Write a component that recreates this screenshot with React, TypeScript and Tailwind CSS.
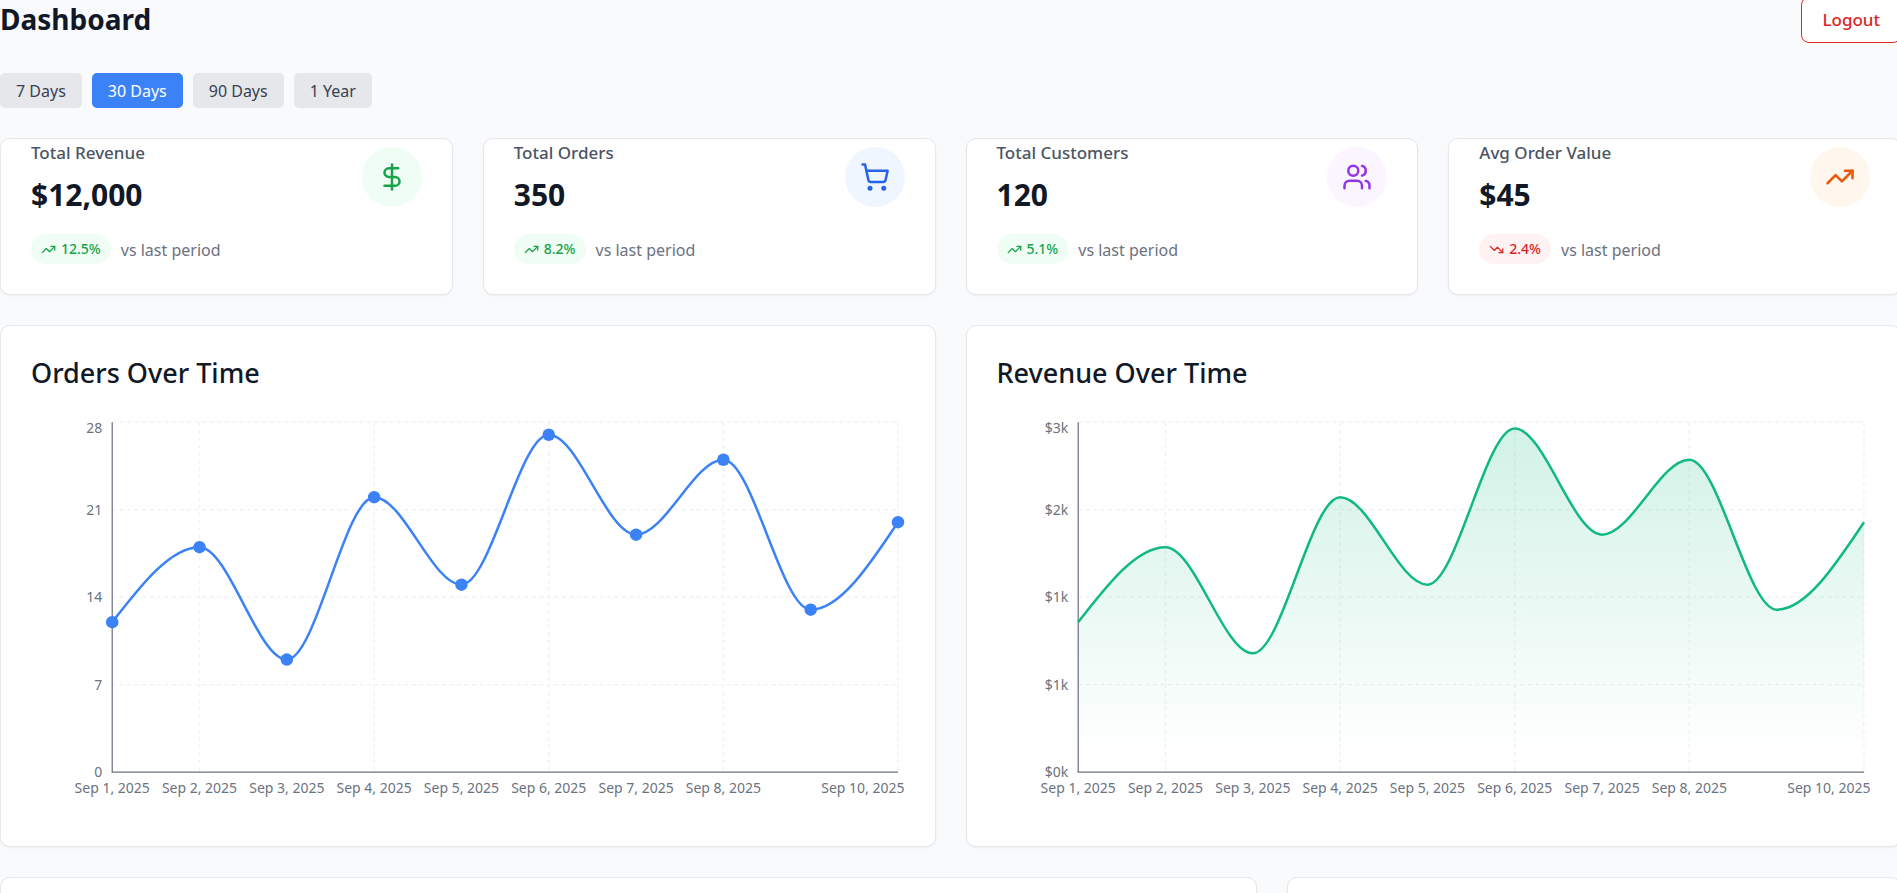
import { useId, useState } from "react";
import { DollarSign, ShoppingCart, TrendingDown, TrendingUp, Users, type LucideIcon } from "lucide-react";

type Point = { x: number; y: number };

const RANGES = ["7 Days", "30 Days", "90 Days", "1 Year"];

const STATS: { label: string; value: string; change: number; icon: LucideIcon; tone: string }[] = [
  { label: "Total Revenue", value: "$12,000", change: 12.5, icon: DollarSign, tone: "bg-[#f0fdf4] text-[#16a34a]" },
  { label: "Total Orders", value: "350", change: 8.2, icon: ShoppingCart, tone: "bg-[#eff6ff] text-[#2563eb]" },
  { label: "Total Customers", value: "120", change: 5.1, icon: Users, tone: "bg-[#faf5ff] text-[#9333ea]" },
  { label: "Avg Order Value", value: "$45", change: -2.4, icon: TrendingUp, tone: "bg-[#fff7ed] text-[#ea580c]" },
];

const ORDERS = [12, 18, 9, 22, 15, 27, 19, 25, 13, 20];
const REVENUE = [1200, 1800, 950, 2200, 1500, 2750, 1900, 2500, 1300, 2000];

const CARD = "rounded-[10px] border border-[#e5e7eb] bg-white shadow-[0_1px_2px_rgba(0,0,0,0.06)]";

const WIDTH = 874;
const HEIGHT = 400;
const LEFT = 81.25;
const RIGHT = 867.5;
const TOP = 6.25;
const BOTTOM = 356.25;
const STEP = (RIGHT - LEFT) / 9;

function toPoints(values: number[], max: number): Point[] {
  return values.map((v, i) => ({ x: LEFT + i * STEP, y: BOTTOM - (v / max) * (BOTTOM - TOP) }));
}

/** Monotone cubic interpolation, so that the curve never overshoots its data. */
function monotonePath(p: Point[]): string {
  const n = p.length;
  const slope = p.slice(1).map((q, i) => (q.y - p[i].y) / (q.x - p[i].x));
  const t: number[] = new Array(n).fill(0);
  for (let i = 1; i < n - 1; i++) {
    const a = slope[i - 1];
    const b = slope[i];
    t[i] = (Math.sign(a) + Math.sign(b)) * Math.min(Math.abs(a), Math.abs(b), Math.abs(a + b) / 4) || 0;
  }
  t[0] = (3 * slope[0] - t[1]) / 2;
  t[n - 1] = (3 * slope[n - 2] - t[n - 2]) / 2;
  let d = `M${p[0].x},${p[0].y}`;
  for (let i = 1; i < n; i++) {
    const h = (p[i].x - p[i - 1].x) / 3;
    d += `C${p[i - 1].x + h},${p[i - 1].y + h * t[i - 1]},${p[i].x - h},${p[i].y - h * t[i]},${p[i].x},${p[i].y}`;
  }
  return d;
}

function TimeChart({ title, values, max, ticks, color, area }: {
  title: string;
  values: number[];
  max: number;
  ticks: string[];
  color: string;
  area?: boolean;
}) {
  const id = useId();
  const points = toPoints(values, max);
  const line = monotonePath(points);
  const rows = ticks.map((label, i) => ({ label, y: BOTTOM - (i * (BOTTOM - TOP)) / (ticks.length - 1) }));

  return (
    <section className={`p-[30px] ${CARD}`}>
      <h2 className="mb-[26px] text-[27px] leading-[34px] font-medium">{title}</h2>
      <svg viewBox={`0 0 ${WIDTH} ${HEIGHT}`} role="img" aria-label={title} className="block h-auto w-full text-sm">
        <defs>
          <linearGradient id={id} x1="0" y1="0" x2="0" y2="1">
            <stop offset="5%" stopColor={color} stopOpacity="0.3" />
            <stop offset="95%" stopColor={color} stopOpacity="0" />
          </linearGradient>
        </defs>
        <g stroke="#f0f0f0" strokeWidth="1.25" strokeDasharray="3.75 3.75">
          {rows.slice(1).map((r) => (
            <line key={r.y} x1={LEFT} x2={RIGHT} y1={r.y} y2={r.y} />
          ))}
          {[1, 3, 5, 7, 9].map((i) => (
            <line key={i} x1={points[i].x} x2={points[i].x} y1={TOP} y2={BOTTOM} />
          ))}
        </g>
        {area && <path d={`${line}V${BOTTOM}H${LEFT}Z`} fill={`url(#${id})`} fillOpacity="0.6" />}
        <path d={`M${LEFT},${TOP}V${BOTTOM}H${RIGHT}`} fill="none" stroke="#6b7280" strokeWidth="1.25" />
        <path d={line} fill="none" stroke={color} strokeWidth="2.5" />
        {!area && points.map((p) => <circle key={p.x} cx={p.x} cy={p.y} r="6.25" fill={color} />)}
        <g fill="#6b7280" textAnchor="end">
          {rows.map((r) => (
            <text key={r.y} x={LEFT - 10} y={Math.max(r.y + 5, 17)}>
              {r.label}
            </text>
          ))}
          <text x={WIDTH} y="377">Sep 10, 2025</text>
        </g>
        <g fill="#6b7280" textAnchor="middle">
          {points.slice(0, 8).map((p, i) => (
            <text key={p.x} x={p.x} y="377">{`Sep ${i + 1}, 2025`}</text>
          ))}
        </g>
      </svg>
    </section>
  );
}

function StatCard({ label, value, change, icon: Icon, tone }: (typeof STATS)[number]) {
  const up = change > 0;
  const Trend = up ? TrendingUp : TrendingDown;
  return (
    <section className={`px-[30px] pt-[2px] pb-[30px] ${CARD}`}>
      <div className="flex items-center justify-between">
        <div>
          <h2 className="mb-3 text-[17px] leading-6 font-medium text-[#4b5563]">{label}</h2>
          <p className="text-[30px] leading-9 font-bold">{value}</p>
        </div>
        <span className={`flex size-[60px] items-center justify-center rounded-full ${tone}`}>
          <Icon size={30} />
        </span>
      </div>
      <div className="mt-[21px] flex items-center gap-[10px]">
        <span
          className={`flex h-[30px] items-center gap-[5px] rounded-full px-[10px] text-sm font-medium ${
            up ? "bg-[#f0fdf4] text-[#16a34a]" : "bg-[#fef2f2] text-[#dc2626]"
          }`}
        >
          <Trend size={15} />
          {Math.abs(change)}%
        </span>
        <span className="pt-[2px] text-base text-[#6b7280]">vs last period</span>
      </div>
    </section>
  );
}

export default function App() {
  const [range, setRange] = useState("30 Days");
  return (
    <div className="h-screen overflow-hidden bg-[#f9fafc] font-['Noto_Sans','Open_Sans',sans-serif] text-[#111827]">
      <main className="-mt-[3px] -mr-1 flex flex-col gap-[30px]">
        <header className="flex h-[46px] items-center justify-between">
          <h1 className="pb-[2px] text-[28px] leading-9 font-bold">Dashboard</h1>
          <button
            type="button"
            className="h-full rounded-lg border border-[#dc2626] bg-white px-5 text-[17px] font-medium text-[#dc2626]"
          >
            Logout
          </button>
        </header>

        <div className="flex gap-[10px]">
          {RANGES.map((r) => (
            <button
              key={r}
              type="button"
              aria-pressed={r === range}
              onClick={() => setRange(r)}
              className={`h-[35px] rounded-[5px] px-4 text-base ${
                r === range ? "bg-[#3b82f6] text-white" : "bg-[#e5e7eb] text-[#374151]"
              }`}
            >
              {r}
            </button>
          ))}
        </div>

        <div className="grid grid-cols-4 gap-[30px]">
          {STATS.map((s) => (
            <StatCard key={s.label} {...s} />
          ))}
        </div>

        <div className="grid grid-cols-2 gap-[30px]">
          <TimeChart title="Orders Over Time" values={ORDERS} max={28} ticks={["0", "7", "14", "21", "28"]} color="#3b82f6" />
          <TimeChart
            title="Revenue Over Time"
            values={REVENUE}
            max={2800}
            ticks={["$0k", "$1k", "$1k", "$2k", "$3k"]}
            color="#10b981"
            area
          />
        </div>

        <div className="grid grid-cols-3 gap-[30px]">
          <section className={`col-span-2 h-96 ${CARD}`} />
          <section className={`h-96 ${CARD}`} />
        </div>
      </main>
    </div>
  );
}
